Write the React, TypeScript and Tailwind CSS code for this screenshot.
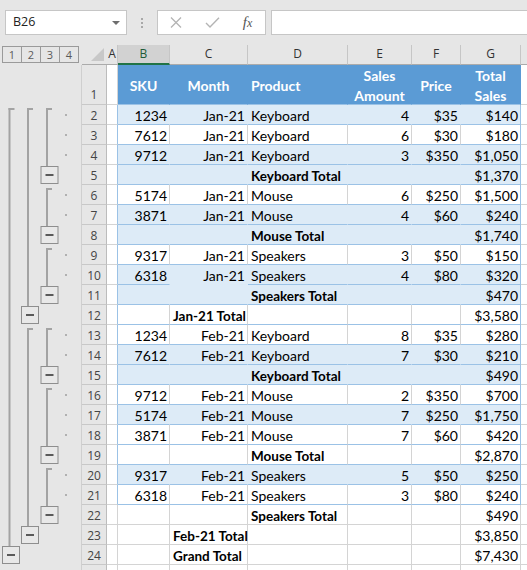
import React from 'react';

type Kind = 'h' | 'b' | 'w' | 'p';

interface RowDef {
  n: number;
  k: Kind;
  c: string[];
  bold?: 'C' | 'D';
}

const ROWS: RowDef[] = [
  { n: 2, k: 'b', c: ['1234', 'Jan-21', 'Keyboard', '4', '$35', '$140'] },
  { n: 3, k: 'w', c: ['7612', 'Jan-21', 'Keyboard', '6', '$30', '$180'] },
  { n: 4, k: 'b', c: ['9712', 'Jan-21', 'Keyboard', '3', '$350', '$1,050'] },
  { n: 5, k: 'b', c: ['', '', 'Keyboard Total', '', '', '$1,370'], bold: 'D' },
  { n: 6, k: 'w', c: ['5174', 'Jan-21', 'Mouse', '6', '$250', '$1,500'] },
  { n: 7, k: 'b', c: ['3871', 'Jan-21', 'Mouse', '4', '$60', '$240'] },
  { n: 8, k: 'b', c: ['', '', 'Mouse Total', '', '', '$1,740'], bold: 'D' },
  { n: 9, k: 'w', c: ['9317', 'Jan-21', 'Speakers', '3', '$50', '$150'] },
  { n: 10, k: 'b', c: ['6318', 'Jan-21', 'Speakers', '4', '$80', '$320'] },
  { n: 11, k: 'b', c: ['', '', 'Speakers Total', '', '', '$470'], bold: 'D' },
  { n: 12, k: 'w', c: ['', 'Jan-21 Total', '', '', '', '$3,580'], bold: 'C' },
  { n: 13, k: 'w', c: ['1234', 'Feb-21', 'Keyboard', '8', '$35', '$280'] },
  { n: 14, k: 'b', c: ['7612', 'Feb-21', 'Keyboard', '7', '$30', '$210'] },
  { n: 15, k: 'b', c: ['', '', 'Keyboard Total', '', '', '$490'], bold: 'D' },
  { n: 16, k: 'w', c: ['9712', 'Feb-21', 'Mouse', '2', '$350', '$700'] },
  { n: 17, k: 'b', c: ['5174', 'Feb-21', 'Mouse', '7', '$250', '$1,750'] },
  { n: 18, k: 'w', c: ['3871', 'Feb-21', 'Mouse', '7', '$60', '$420'] },
  { n: 19, k: 'w', c: ['', '', 'Mouse Total', '', '', '$2,870'], bold: 'D' },
  { n: 20, k: 'b', c: ['9317', 'Feb-21', 'Speakers', '5', '$50', '$250'] },
  { n: 21, k: 'w', c: ['6318', 'Feb-21', 'Speakers', '3', '$80', '$240'] },
  { n: 22, k: 'p', c: ['', '', 'Speakers Total', '', '', '$490'], bold: 'D' },
  { n: 23, k: 'p', c: ['', 'Feb-21 Total', '', '', '', '$3,850'], bold: 'C' },
  { n: 24, k: 'p', c: ['', 'Grand Total', '', '', '', '$7,430'], bold: 'C' },
  { n: 25, k: 'p', c: ['', '', '', '', '', ''] },
];

const COLS = [
  { key: 'B', w: 'w-[52px]', right: true },
  { key: 'C', w: 'w-[78px]', right: true },
  { key: 'D', w: 'w-[100px]', right: false },
  { key: 'E', w: 'w-[64px]', right: true },
  { key: 'F', w: 'w-[49px]', right: true },
  { key: 'G', w: 'w-[60px]', right: true },
];

const HEAD_FONT = "font-['Open_Sans',sans-serif]";
const CELL_FONT = "font-['Lato',sans-serif]";

// outline drawing, y measured from the top of row 1
const rowTop = (n: number) => (n === 1 ? 0 : 40 + 20 * (n - 2));
const LINE = '#a3a3a3';

const BRACKETS: { level: number; start: number; end: number }[] = [
  { level: 0, start: 2, end: 24 },
  { level: 1, start: 2, end: 12 },
  { level: 1, start: 13, end: 23 },
  { level: 2, start: 2, end: 5 },
  { level: 2, start: 6, end: 8 },
  { level: 2, start: 9, end: 11 },
  { level: 2, start: 13, end: 15 },
  { level: 2, start: 16, end: 19 },
  { level: 2, start: 20, end: 22 },
];

const DETAIL = [2, 3, 4, 6, 7, 9, 10, 13, 14, 16, 17, 18, 20, 21];

function Outline() {
  return (
    <svg width="81" height="505" viewBox="0 0 81 505">
      {BRACKETS.map((b, i) => {
        const lx = [8.5, 27, 46][b.level];
        const bx = [2, 21, 40.5][b.level];
        const y0 = rowTop(b.start) + 3;
        const yb = rowTop(b.end);
        return (
          <g key={i}>
            <rect x={lx} y={y0} width={6} height={2} fill={LINE} />
            <rect x={lx} y={y0} width={2} height={yb + 1 - y0} fill={LINE} />
            <rect x={bx + 0.5} y={yb + 1.5} width={17} height={17} fill="#e8e8e8" stroke="#8e8e8e" />
            <rect x={bx + 5} y={yb + 9} width={8} height={2} fill="#5a5a5a" />
          </g>
        );
      })}
      {DETAIL.map((n) => (
        <rect key={n} x={65} y={rowTop(n) + 9} width={2} height={2} fill="#b0b0b0" />
      ))}
    </svg>
  );
}

function RowHead({ n, tall }: { n: number; tall?: boolean }) {
  return (
    <div
      className={`w-[25px] shrink-0 h-full flex items-end justify-center bg-[#e6e6e6] border-r border-b border-r-[#bcbcbc] border-b-[#c8c8c8] text-[12px] leading-[16px] text-[#444] ${HEAD_FONT} ${tall ? 'pb-[1px]' : ''}`}
    >
      {n < 25 ? n : ''}
    </div>
  );
}

function ColumnHeaders() {
  const letters = [
    { l: 'A', w: 'w-[11px]' },
    { l: 'B', w: 'w-[52px]' },
    { l: 'C', w: 'w-[78px]' },
    { l: 'D', w: 'w-[100px]' },
    { l: 'E', w: 'w-[64px]' },
    { l: 'F', w: 'w-[49px]' },
    { l: 'G', w: 'w-[60px]' },
  ];
  return (
    <div className={`flex h-[20px] ${HEAD_FONT} text-[12px] leading-[16px]`}>
      <div className="w-[25px] shrink-0 flex items-start pl-[9px] pt-[3px] border-b border-b-[#ababab]">
        <svg width="14" height="14" viewBox="0 0 14 14">
          <polygon points="13,0 13,13 0,13" fill="#c8c8c8" />
        </svg>
      </div>
      {letters.map(({ l, w }) =>
        l === 'B' ? (
          <div
            key={l}
            className={`${w} shrink-0 flex items-end justify-center pb-[1px] bg-[#d2d2d2] border-r border-r-[#c6c6c6] border-b-2 border-b-[#217346] text-[#1e5c38]`}
          >
            {l}
          </div>
        ) : (
          <div
            key={l}
            className={`${w} shrink-0 flex items-end justify-center pb-[2px] border-r border-r-[#c6c6c6] border-b border-b-[#ababab] text-[#333]`}
          >
            {l}
          </div>
        )
      )}
      <div className="flex-1 border-b border-b-[#ababab]" />
    </div>
  );
}

function HeaderRow() {
  const labels: React.ReactNode[] = [
    'SKU',
    'Month',
    'Product',
    <span key="sa" className="text-center leading-[20px]">
      Sales
      <br />
      Amount
    </span>,
    'Price',
    <span key="ts" className="text-center leading-[20px]">
      Total
      <br />
      Sales
    </span>,
  ];
  return (
    <div className="flex h-[40px]">
      <RowHead n={1} tall />
      <div className="w-[11px] shrink-0 bg-white border-r border-b border-r-[#d4d4d4] border-b-[#d4d4d4]" />
      {COLS.map((col, i) => (
        <div
          key={col.key}
          className={`${col.w} shrink-0 flex items-center pt-[3px] bg-[#5b9bd5] border-r border-b border-r-[#5b9bd5] border-b-[#9bc2e6] ${CELL_FONT} text-[14px] leading-[16px] font-bold text-white ${col.key === 'D' ? 'justify-start pl-[3px]' : 'justify-center'}`}
        >
          {labels[i]}
        </div>
      ))}
      <div className="flex-1 bg-white border-b border-b-[#d4d4d4]" />
    </div>
  );
}

function DataRow({ row }: { row: RowDef }) {
  const { k, n } = row;
  const bg = k === 'b' ? 'bg-[#ddebf7]' : 'bg-white';
  const bottom = k === 'p' ? 'border-b-[#d4d4d4]' : 'border-b-[#9bc2e6]';
  const inner = k === 'b' ? 'border-r-[#ddebf7]' : 'border-r-[#d4d4d4]';
  const edge = k === 'p' ? 'border-r-[#d4d4d4]' : 'border-r-[#9bc2e6]';
  return (
    <div className="flex h-[20px]">
      <RowHead n={n} />
      <div
        className={`w-[11px] shrink-0 bg-white border-r border-b border-b-[#d4d4d4] ${k === 'p' ? 'border-r-[#d4d4d4]' : 'border-r-[#9bc2e6]'}`}
      />
      {COLS.map((col, i) => {
        const isBold = row.bold === col.key;
        const alignRight = col.right && !isBold;
        // row 10, column C has no bottom rule in the original
        const b = n === 10 && col.key === 'C' ? 'border-b-[#ddebf7]' : bottom;
        return (
          <div
            key={col.key}
            className={`${col.w} shrink-0 flex items-end whitespace-nowrap ${bg} border-r border-b ${col.key === 'G' ? edge : inner} ${b} ${CELL_FONT} leading-[16px] text-black ${isBold ? 'font-bold text-[13.5px]' : 'text-[14px]'} ${alignRight ? 'justify-end pr-[2px]' : 'justify-start pl-[3px]'}`}
          >
            <span className="relative z-10">{row.c[i]}</span>
          </div>
        );
      })}
      <div className="flex-1 bg-white border-b border-b-[#d4d4d4]" />
    </div>
  );
}

function FormulaBar() {
  return (
    <div className={`h-[45px] flex items-start pt-[10px] pl-[5px] bg-[#e6e6e6] ${HEAD_FONT}`}>
      <div className="w-[122px] h-[25px] shrink-0 flex items-center justify-between bg-white border border-[#c6c6c6] pl-[7px] pr-[6px]">
        <span className="text-[12.5px] text-[#222]">B26</span>
        <svg width="8" height="4" viewBox="0 0 8 4">
          <polygon points="0,0 8,0 4,4" fill="#6e6e6e" />
        </svg>
      </div>
      <div className="w-[30px] h-[25px] shrink-0 flex flex-col items-center justify-center gap-[2px]">
        <span className="w-[2px] h-[2px] bg-[#a8a8a8]" />
        <span className="w-[2px] h-[2px] bg-[#a8a8a8]" />
        <span className="w-[2px] h-[2px] bg-[#a8a8a8]" />
      </div>
      <div className="w-[109px] h-[25px] shrink-0 flex items-center bg-white border border-[#c6c6c6]">
        <div className="w-[36px] flex justify-center">
          <svg width="12" height="11" viewBox="0 0 12 11">
            <path d="M1 0.5 L11 10.5 M11 0.5 L1 10.5" stroke="#b4b4b4" strokeWidth="1.3" />
          </svg>
        </div>
        <div className="w-[36px] flex justify-center">
          <svg width="15" height="11" viewBox="0 0 15 11">
            <path d="M1 6 L5 10 L14 0.8" stroke="#b4b4b4" strokeWidth="1.4" fill="none" />
          </svg>
        </div>
        <div className="w-[35px] flex justify-center">
          <span className="font-['Liberation_Serif',serif] italic text-[15px] leading-none text-[#555]">
            f<span className="text-[12px]">x</span>
          </span>
        </div>
      </div>
      <div className="ml-[5px] w-[262px] h-[25px] shrink-0 bg-white border border-[#c6c6c6]" />
    </div>
  );
}

export default function App() {
  return (
    <div className="w-[527px] h-[570px] overflow-hidden bg-[#e6e6e6]">
      <FormulaBar />
      <div className="flex">
        <div className="w-[82px] shrink-0 flex flex-col">
          <div className={`h-[20px] flex items-start pt-[1px] pl-[2px] ${HEAD_FONT}`}>
            {[1, 2, 3, 4].map((lv, i) => (
              <div
                key={lv}
                className={`w-[20px] h-[17px] flex items-center justify-center border border-[#9a9a9a] text-[11px] leading-none text-[#5a5a5a] ${i > 0 ? '-ml-px' : ''}`}
              >
                {lv}
              </div>
            ))}
          </div>
          <div className="border-r border-r-[#cfcfcf] h-[505px]">
            <Outline />
          </div>
        </div>
        <div className="flex-1 flex flex-col">
          <ColumnHeaders />
          <HeaderRow />
          {ROWS.map((r) => (
            <DataRow key={r.n} row={r} />
          ))}
        </div>
      </div>
    </div>
  );
}
